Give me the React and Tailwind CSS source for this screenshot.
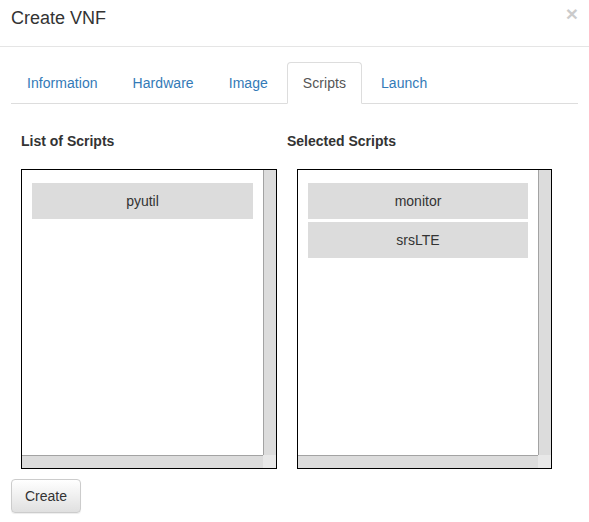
const tabs = ["Information", "Hardware", "Image", "Scripts", "Launch"];

function ScriptBox({ items, width }) {
  return (
    <div className={`${width} h-[300px] border border-black flex flex-col`}>
      <div className="flex-1 flex min-h-0">
        <div className="flex-1 pt-[13px] px-[10px] flex flex-col gap-[3px]">
          {items.map((item) => (
            <div
              key={item}
              className="h-[36px] bg-[#dcdcdc] flex items-center justify-center text-[14px] text-[#333]"
            >
              {item}
            </div>
          ))}
        </div>
        {/* vertical scrollbar */}
        <div className="w-[13px] bg-[#dcdcdc] border-l border-[#a3a3a3]" />
      </div>
      {/* horizontal scrollbar */}
      <div className="h-[13px] flex">
        <div className="flex-1 bg-[#dcdcdc] border-t border-[#a3a3a3]" />
        <div className="w-[13px] bg-[#e8e8e8]" />
      </div>
    </div>
  );
}

export default function App() {
  const active = "Scripts";

  return (
    <div className="w-[589px] h-[522px] bg-white text-[#333] font-['Liberation_Sans',Arial,sans-serif] text-[14px]">
      {/* Header */}
      <div className="h-[47px] border-b border-[#e5e5e5] flex items-start justify-between pl-[11px] pr-[11px]">
        <h4 className="pt-[8px] text-[18px] leading-[20px] text-[#333]">Create VNF</h4>
        <span className="mt-[3px] text-[21px] leading-[21px] font-bold text-black opacity-20">×</span>
      </div>

      {/* Body */}
      <div className="pt-[15px] px-[11px]">
        <ul className="flex border-b border-[#ddd]">
          {tabs.map((tab) => {
            const isActive = tab === active;
            return (
              <li key={tab} className="-mb-px mr-[3px]">
                <a
                  className={`block px-[15px] py-[10px] leading-[20px] tracking-[0.05px] border rounded-t-[4px] ${
                    isActive
                      ? "bg-white text-[#555] border-[#ddd] border-b-transparent"
                      : "text-[#337ab7] border-transparent"
                  }`}
                >
                  {tab}
                </a>
              </li>
            );
          })}
        </ul>

        <div className="flex mt-[27px]">
          <div className="w-[276px] pl-[10px]">
            <h5 className="font-bold leading-[20px]">List of Scripts</h5>
            <div className="mt-[18px]">
              <ScriptBox items={["pyutil"]} width="w-[256px]" />
            </div>
          </div>
          <div className="flex-1">
            <h5 className="font-bold leading-[20px]">Selected Scripts</h5>
            <div className="mt-[18px] pl-[10px]">
              <ScriptBox items={["monitor", "srsLTE"]} width="w-[255px]" />
            </div>
          </div>
        </div>

        <button className="mt-[10px] h-[34px] px-[13px] leading-[20px] text-[14px] text-[#333] border border-[#ccc] rounded-[4px] bg-gradient-to-b from-white to-[#e0e0e0] shadow-[inset_0_1px_0_rgba(255,255,255,0.15),0_1px_1px_rgba(0,0,0,0.075)]">
          Create
        </button>
      </div>
    </div>
  );
}
